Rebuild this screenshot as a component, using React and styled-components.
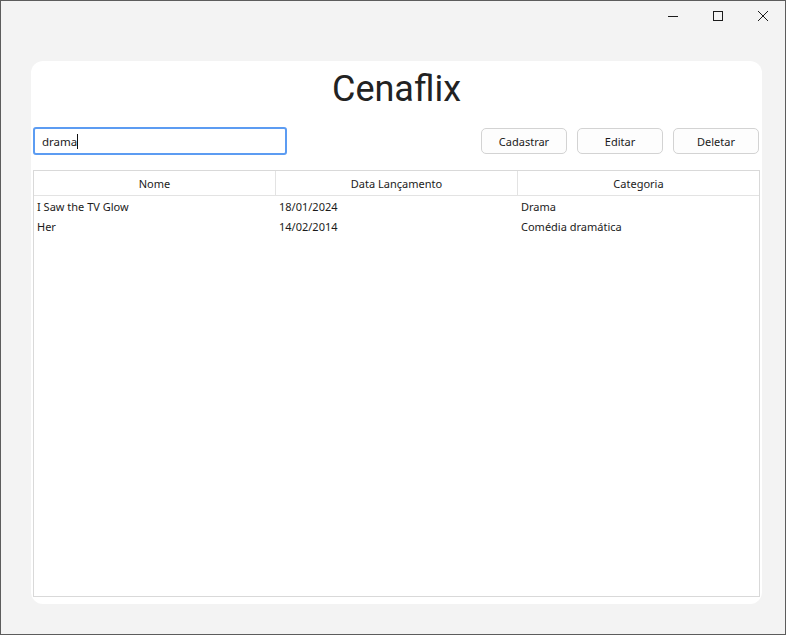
import React from 'react';
import styled, { createGlobalStyle } from 'styled-components';

const GlobalStyle = createGlobalStyle`
  html, body { margin: 0; padding: 0; background: #f3f3f3; }
  * { box-sizing: border-box; }
`;

const Window = styled.div`
  width: 786px;
  height: 635px;
  border: 1px solid #5c5c5c;
  background: #f3f3f3;
  display: flex;
  flex-direction: column;
  font-family: 'Noto Sans', 'Open Sans', sans-serif;
  color: #1b1b1b;
`;

const TitleBar = styled.div`
  height: 31px;
  display: flex;
  justify-content: flex-end;
  align-items: stretch;
`;

const CaptionButton = styled.div`
  width: 45px;
  display: flex;
  align-items: center;
  justify-content: center;
  padding-bottom: 1px;
`;

const Card = styled.div`
  margin: 29px 23px 0 30px;
  height: 543px;
  background: #ffffff;
  border-radius: 12px;
  padding: 0 2px 7px 2px;
  display: flex;
  flex-direction: column;
`;

const Title = styled.h1`
  margin: 8px 0 0 0;
  font-family: Roboto, 'Noto Sans', sans-serif;
  font-weight: 400;
  font-size: 36px;
  line-height: 40px;
  text-align: center;
  color: #222;
`;

const Toolbar = styled.div`
  margin-top: 18px;
  display: flex;
  align-items: center;
`;

const SearchBox = styled.div`
  width: 254px;
  height: 28px;
  border: 2px solid #5c9cf2;
  border-radius: 3px;
  padding: 0 7px;
  display: flex;
  align-items: center;
  font-size: 11.5px;
`;

const Caret = styled.span`
  display: inline-block;
  width: 1px;
  height: 15px;
  background: #111;
`;

const Spacer = styled.div`
  flex: 1;
`;

const Buttons = styled.div`
  display: flex;
  gap: 10px;
  margin-right: 1px;
`;

const Button = styled.button`
  width: 86px;
  height: 26px;
  border: 1px solid #d3d3d3;
  border-radius: 5px;
  background: #fdfdfd;
  font-family: inherit;
  font-size: 11px;
  color: #1b1b1b;
  padding: 0;
`;

const Table = styled.div`
  margin-top: 15px;
  flex: 1;
  border: 1px solid #d9d9d9;
  display: flex;
  flex-direction: column;
`;

const Row = styled.div`
  display: grid;
  grid-template-columns: 242px 242px 1fr;
  height: ${p => (p.$head ? 25 : 20)}px;
  border-bottom: ${p => (p.$head ? '1px solid #e3e3e3' : 'none')};
`;

const HeadCell = styled.div`
  display: flex;
  align-items: center;
  justify-content: center;
  font-size: 11px;
  border-right: ${p => (p.$last ? 'none' : '1px solid #e3e3e3')};
`;

const Cell = styled.div`
  display: flex;
  align-items: center;
  padding-left: 3px;
  font-size: 11px;
  white-space: nowrap;
`;

const movies = [
  ['I Saw the TV Glow', '18/01/2024', 'Drama'],
  ['Her', '14/02/2014', 'Comédia dramática'],
];

export default function App() {
  return (
    <>
      <GlobalStyle />
      <Window>
        <TitleBar>
          <CaptionButton>
            <svg width="12" height="12" viewBox="0 0 12 12">
              <path d="M1 6.5h10" stroke="#1b1b1b" strokeWidth="1" />
            </svg>
          </CaptionButton>
          <CaptionButton>
            <svg width="12" height="12" viewBox="0 0 12 12">
              <rect x="1.5" y="1.5" width="9" height="9" fill="none" stroke="#1b1b1b" strokeWidth="1" />
            </svg>
          </CaptionButton>
          <CaptionButton>
            <svg width="12" height="12" viewBox="0 0 12 12">
              <path d="M1 1l10 10M11 1L1 11" stroke="#1b1b1b" strokeWidth="1" />
            </svg>
          </CaptionButton>
        </TitleBar>
        <Card>
          <Title>Cenaflix</Title>
          <Toolbar>
            <SearchBox>
              drama<Caret />
            </SearchBox>
            <Spacer />
            <Buttons>
              <Button>Cadastrar</Button>
              <Button>Editar</Button>
              <Button>Deletar</Button>
            </Buttons>
          </Toolbar>
          <Table>
            <Row $head>
              <HeadCell>Nome</HeadCell>
              <HeadCell>Data Lançamento</HeadCell>
              <HeadCell $last>Categoria</HeadCell>
            </Row>
            {movies.map(m => (
              <Row key={m[0]}>
                <Cell>{m[0]}</Cell>
                <Cell>{m[1]}</Cell>
                <Cell>{m[2]}</Cell>
              </Row>
            ))}
          </Table>
        </Card>
      </Window>
    </>
  );
}
